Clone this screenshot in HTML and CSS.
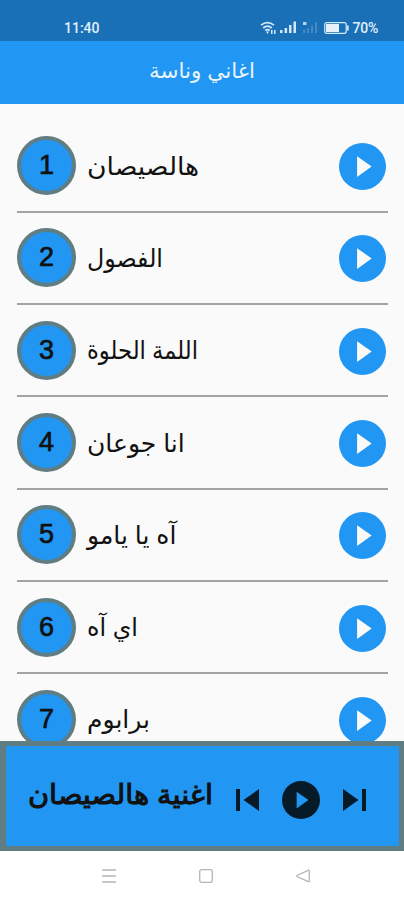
FILE: index.html
```html
<!DOCTYPE html>
<html lang="ar">
<head>
    <meta charset="UTF-8">
    <meta name="viewport" content="width=device-width, initial-scale=1.0">
    <title>اغاني وناسة</title>
    <link rel="stylesheet" href="styles.css">
</head>
<body>
    <!-- Shared icons -->
    <svg width="0" height="0" class="sprite">
        <symbol id="play" viewBox="0 0 20 20">
            <path fill-rule="evenodd" d="M10 0a10 10 0 1 0 0 20a10 10 0 0 0 0-20zM7.700 5.600L13.900 10l-6.200 4.500z"/>
        </symbol>
    </svg>

    <div class="status-bar">
        <span class="time">11:40</span>
        <div class="status-icons">
            <svg width="17" height="14" viewBox="0 0 17 14">
                <g fill="none" stroke="#d3e8f8" stroke-width="1.700">
                    <path d="M1 4.200Q7.500-1 14 4.200"/>
                    <path d="M3.200 7Q7.500 3.400 11.800 7"/>
                    <path d="M5.300 9.500Q7.500 7.700 9.700 9.500"/>
                </g>
                <path fill="#d3e8f8" d="M6 10.500h3L7.500 13zM11 9h1.500v4H11zM14 9h1.500v4H14z"/>
            </svg>
            <svg class="signal" width="17" height="13" viewBox="0 0 17 13">
                <path fill="#d3e8f8" d="M0 9h2.500v3H0zM4.600 7h2.500v5H4.600zM9 4h2.500v8H9zM13.500 0.500h2.500v11.500h-2.500z"/>
            </svg>
            <svg class="signal-off" width="16" height="13" viewBox="0 0 16 13">
                <path fill="#b5d5ee" d="M1 1h3.500v3H1z"/>
                <path fill="#4389c4" d="M1 8.500h2.500v3.500H1zM5 7h2v5H5zM9 4.500h2v7.500H9zM13 1h2v11h-2z"/>
            </svg>
            <svg width="26" height="12" viewBox="0 0 26 12">
                <rect x="0.700" y="0.700" width="21.500" height="10.600" rx="2" fill="none" stroke="#d3e8f8" stroke-width="1.200"/>
                <rect x="2" y="2" width="13" height="8" fill="#e6f1fa"/>
                <path d="M23.800 3.500v5" stroke="#d3e8f8" stroke-width="1.800"/>
            </svg>
            <span class="battery">70%</span>
        </div>
    </div>

    <header class="header">
        <h1 dir="rtl">اغاني وناسة</h1>
    </header>

    <main class="songs">
        <div class="song">
            <span class="number">1</span>
            <span class="name wide" dir="rtl">هالصيصان</span>
            <svg class="play"><use href="#play"/></svg>
        </div>
        <div class="song">
            <span class="number">2</span>
            <span class="name narrow" dir="rtl">الفصول</span>
            <svg class="play"><use href="#play"/></svg>
        </div>
        <div class="song">
            <span class="number">3</span>
            <span class="name narrower" dir="rtl">اللمة الحلوة</span>
            <svg class="play"><use href="#play"/></svg>
        </div>
        <div class="song">
            <span class="number">4</span>
            <span class="name" dir="rtl">انا جوعان</span>
            <svg class="play"><use href="#play"/></svg>
        </div>
        <div class="song">
            <span class="number">5</span>
            <span class="name" dir="rtl">آه يا يامو</span>
            <svg class="play"><use href="#play"/></svg>
        </div>
        <div class="song">
            <span class="number">6</span>
            <span class="name narrow" dir="rtl">اي آه</span>
            <svg class="play"><use href="#play"/></svg>
        </div>
        <div class="song">
            <span class="number">7</span>
            <span class="name" dir="rtl">برابوم</span>
            <svg class="play"><use href="#play"/></svg>
        </div>
    </main>

    <div class="player">
        <span class="current" dir="rtl">اغنية هالصيصان</span>
        <div class="controls">
            <svg width="23" height="22" viewBox="0 0 23 22"><path d="M0 0h4v22H0zM23 0v22L7.500 11z"/></svg>
            <svg class="play-dark"><use href="#play"/></svg>
            <svg width="23" height="22" viewBox="0 0 23 22"><path d="M19 0h4v22h-4zM0 0l15.500 11L0 22z"/></svg>
        </div>
    </div>

    <nav class="nav">
        <svg width="14" height="14" viewBox="0 0 14 14"><path d="M0 1h14M0 7h14M0 13h14"/></svg>
        <svg width="14" height="14" viewBox="0 0 14 14"><rect x="0.700" y="0.700" width="12.600" height="12.600" rx="2"/></svg>
        <svg width="14" height="14" viewBox="0 0 14 14"><path d="M12.500 1.200Q13.300 1 13.300 2v10q0 1-.9.600L1 7.500Q.4 7 1 6.500z"/></svg>
    </nav>
</body>
</html>
```
FILE: styles.css
```css
body, h1 {
    margin: 0;
    padding: 0;
}

body {
    display: flex;
    flex-direction: column;
    height: 900px;
    overflow: hidden;
    background-color: #fafafa;
    font-family: "Liberation Sans", "DejaVu Sans", sans-serif;
    color: #111;
}

svg {
    display: block;
    flex-shrink: 0;
}

.sprite {
    position: absolute;
}

/* Status bar */
.status-bar {
    display: flex;
    justify-content: space-between;
    align-items: center;
    box-sizing: border-box;
    flex: 0 0 41px;
    padding: 14px 26px 0 64px;
    background-color: #1a70b7;
    color: #e2f0fa;
    font-family: Roboto, sans-serif;
    font-size: 14px;
    font-weight: 500;
}

.status-icons {
    display: flex;
    align-items: center;
}

.signal {
    margin-left: 3px;
}

.signal-off {
    margin: 0 6px 0 5px;
}

.battery {
    margin-left: 2px;
    letter-spacing: -0.200px;
}

/* Header */
.header {
    display: flex;
    justify-content: center;
    box-sizing: border-box;
    flex: 0 0 62.500px;
    padding-top: 14px;
    background-color: #2196f3;
    color: #e8f4fe;
}

.header h1 {
    font-size: 21.500px;
    font-weight: normal;
    line-height: 32px;
}

/* Song list */
.songs {
    flex: 1;
    min-height: 0;
    overflow: hidden;
    padding: 17px 16px 0 17px;
}

.song {
    display: flex;
    align-items: center;
    box-sizing: border-box;
    height: 92.300px;
    border-bottom: 2px solid #a3a3a3;
}

.number {
    box-sizing: border-box;
    width: 59px;
    height: 59px;
    border: 4px solid #607d83;
    border-radius: 50%;
    background-color: #2196f3;
    font-size: 27px;
    line-height: 51px;
    text-align: center;
    -webkit-text-stroke: 0.700px #111;
}

.name {
    margin-left: 11px;
    font-size: 25px;
    line-height: 40px;
    transform-origin: left center;
}

.name.wide {
    transform: scaleX(1.065);
}

.name.narrow {
    transform: scaleX(0.95);
}

.name.narrower {
    transform: scaleX(0.905);
}

.play {
    width: 47px;
    height: 47px;
    margin: 2px 2px 0 auto;
    fill: #2196f3;
}

/* Player */
.player {
    display: flex;
    justify-content: space-between;
    align-items: center;
    box-sizing: border-box;
    flex: 0 0 110px;
    padding: 8px 33px 0 22px;
    border: 5px solid #607d83;
    border-left-width: 6px;
    background-color: #2196f3;
}

.current {
    margin-top: -10px;
    font-size: 27px;
    white-space: nowrap;
    transform: scaleX(1.065);
    transform-origin: left center;
    -webkit-text-stroke: 1px #111;
}

.controls {
    display: flex;
    align-items: center;
    gap: 23px;
    fill: #061a28;
}

.play-dark {
    width: 38px;
    height: 38px;
}

/* System navigation */
.nav {
    display: flex;
    justify-content: center;
    align-items: center;
    gap: 83px;
    flex: 0 0 49px;
    padding-left: 8px;
    background-color: #fff;
    fill: none;
    stroke: #b5b5b5;
    stroke-width: 1.300;
}
```
